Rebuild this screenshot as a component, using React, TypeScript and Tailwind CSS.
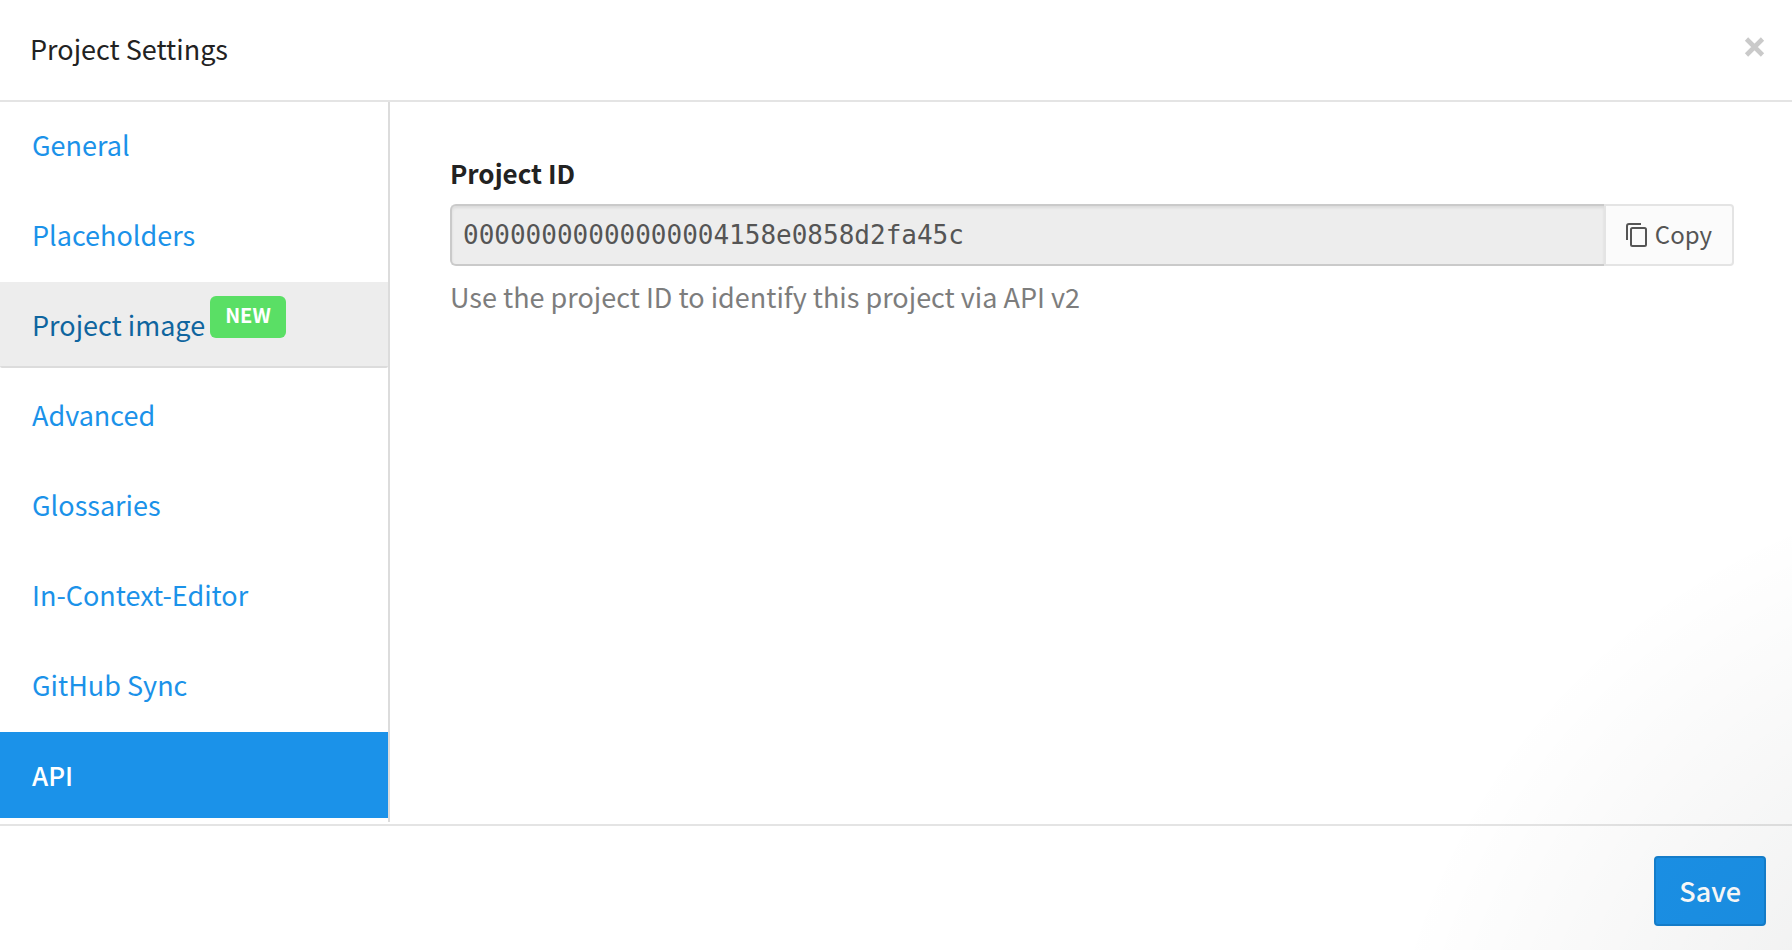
const sections = [
  { label: "General" },
  { label: "Placeholders" },
  { label: "Project image", isNew: true, hovered: true },
  { label: "Advanced" },
  { label: "Glossaries" },
  { label: "In-Context-Editor" },
  { label: "GitHub Sync" },
  { label: "API", active: true },
];

function itemClass(item: { hovered?: boolean; active?: boolean }) {
  const base = "flex h-[86px] items-center border-b-2 pt-0.5 pl-8 ";
  if (item.active) return base + "border-[#1b92e9] bg-[#1b92e9] text-[26px] font-medium text-white";
  if (item.hovered) return base + "rounded-b-[2px] border-[#dcdcdc] bg-[#ededed] text-[#0f659f]";
  return base + "border-transparent text-[#1b92e9] hover:bg-[#ededed]";
}

function CopyIcon() {
  return (
    <svg className="h-6 w-[21px]" viewBox="0 0 21 24" fill="none" stroke="currentColor" strokeWidth="2" aria-hidden="true">
      <path d="M1 17V3Q1 1 3 1H15" />
      <rect x="5" y="5" width="15" height="18" rx="1.5" />
    </svg>
  );
}

export default function App() {
  return (
    <div className="relative flex min-h-screen flex-col bg-white font-['Noto_Sans_CJK_SC',sans-serif] text-[27px] leading-8 text-[#222]">
      <header className="flex h-[102px] items-center justify-between border-b-2 border-[#e4e4e4] pr-[26px] pb-0.5 pl-[30px]">
        <h1>Project Settings</h1>
        <button type="button" aria-label="Close" className="mb-1 text-[#cacaca]">
          <svg className="size-[22px]" viewBox="0 0 22 22" stroke="currentColor" strokeWidth="4.6" aria-hidden="true">
            <path d="M2.5 3L18.5 19M18.5 3L2.5 19" />
          </svg>
        </button>
      </header>

      <div className="flex grow pb-0.5">
        <nav aria-label="Project settings" className="w-[390px] shrink-0 border-r-2 border-[#dcdcdc] pb-1">
          <ul className="flex flex-col gap-1">
            {sections.map((item) => (
              <li key={item.label}>
                <a href="#" className={itemClass(item)} aria-current={item.active ? "page" : undefined}>
                  {item.label}
                  {item.isNew && (
                    <span className="mb-4 ml-[5px] flex h-[42px] items-center rounded-md bg-[#5adf65] px-[15px] pb-1 text-xl font-bold text-white">
                      NEW
                    </span>
                  )}
                </a>
              </li>
            ))}
          </ul>
        </nav>

        <main className="grow pt-[55px] pr-[58px] pl-[60px]">
          <label htmlFor="project-id" className="block text-[26px] leading-8 font-bold">
            Project ID
          </label>
          <div className="mt-[15px] flex h-[62px]">
            <input
              id="project-id"
              readOnly
              value="00000000000000004158e0858d2fa45c"
              className="min-w-0 grow rounded-l-md border-2 border-r-0 border-[#cacaca] bg-[#ededed] px-[11px] font-['DejaVu_Sans_Mono',monospace] text-[26px] text-[#555] shadow-[inset_0_2px_3px_rgba(0,0,0,0.08)] outline-none"
            />
            <button
              type="button"
              className="flex shrink-0 items-center gap-2 rounded-r border-2 border-[#e4e4e4] bg-[#fbfbfb] px-5 text-2xl text-[#555]"
            >
              <CopyIcon />
              <span className="pb-0.5">Copy</span>
            </button>
          </div>
          <p className="mt-[15px] text-[#7d7d7d]">Use the project ID to identify this project via API v2</p>
        </main>
      </div>

      <footer className="flex h-[126px] justify-end border-t-2 border-[#e4e4e4] pt-[30px] pr-[26px]">
        <button
          type="button"
          className="h-[70px] rounded border-2 border-[#1580cf] bg-[#1b92e9] px-[23px] font-medium text-white"
        >
          Save
        </button>
      </footer>

      <div className="pointer-events-none absolute inset-0 bg-[radial-gradient(circle_680px_at_calc(100%_+_258px)_calc(100%_+_200px),rgba(0,10,10,0.05)_48%,rgba(0,0,0,0)_100%)]" />
    </div>
  );
}
